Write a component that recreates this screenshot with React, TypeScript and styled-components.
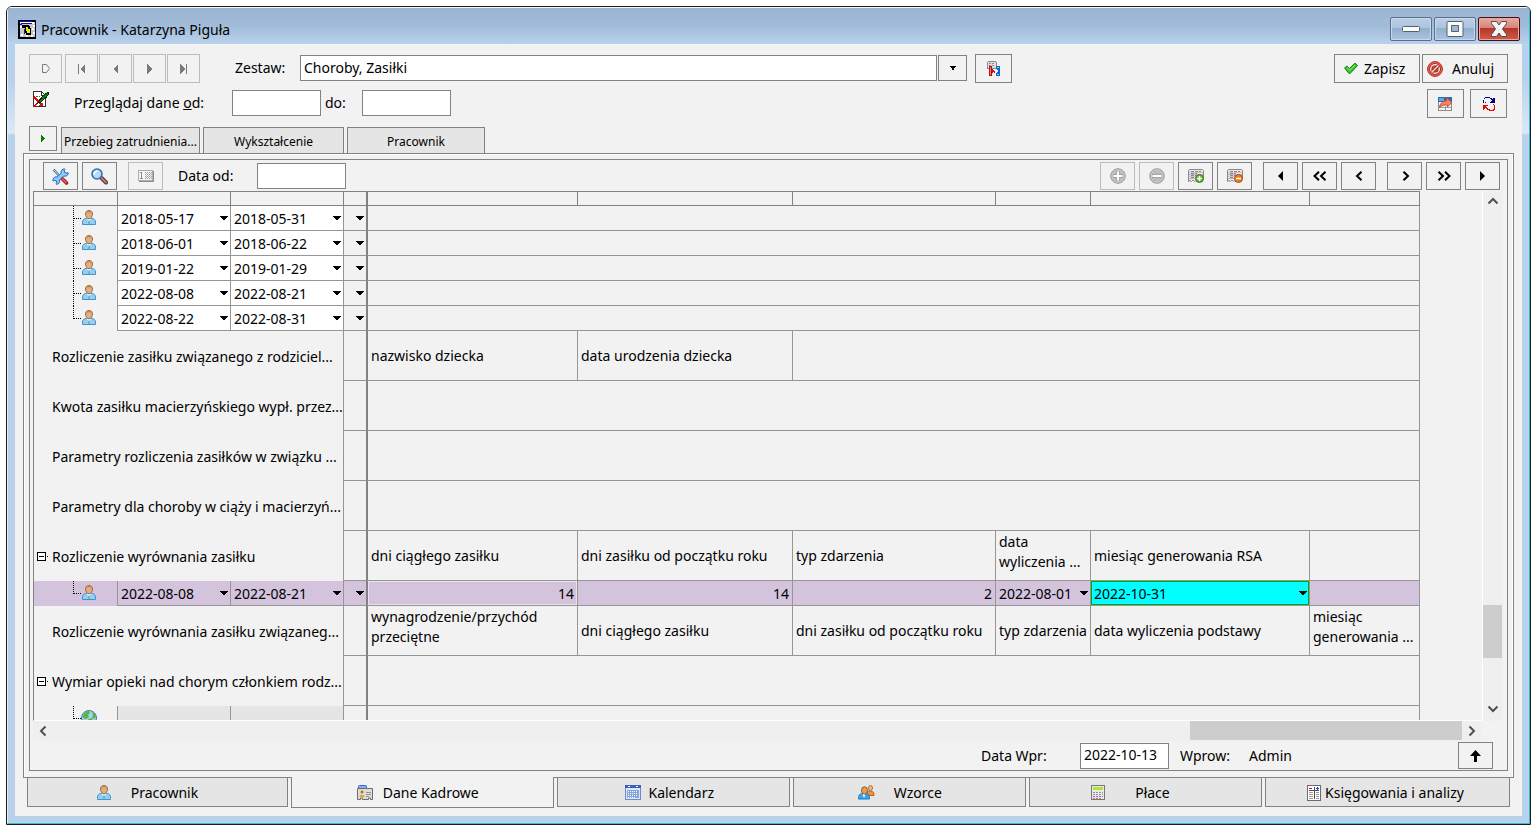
import React from "react";
import styled, { createGlobalStyle, css } from "styled-components";

const color = {
  face: "#f2f2f2",
  tab: "#e5e5e5",
  line: "#828282",
  grid: "#969696",
  soft: "#bcbcbc",
  selected: "#d3c3dc",
  thumb: "#cdcdcd",
};

const Global = createGlobalStyle`
  *, *::before, *::after { box-sizing: border-box; }
  body { margin: 0; background: #fff; color: #000; }
  body, button, input, select, table {
    font-family: "Noto Sans", "Open Sans", sans-serif;
    font-size: 14px;
    line-height: 20px;
  }
`;

/* ---------- window ---------- */

const Page = styled.div`
  height: 100vh;
  min-height: 600px;
  padding: 6px 6px 10px;
`;

const Window = styled.main`
  height: 100%;
  border: 1px solid #1c1c1c;
  border-radius: 6px 6px 0 0;
  overflow: hidden;
`;

const Frame = styled.div`
  height: 100%;
  display: flex;
  flex-direction: column;
  padding: 0 7px 7px;
  border: 1px solid #35bcd6;
  border-top-color: #f4f8fc;
  border-left-color: #e4eef8;
  background: linear-gradient(#9ab5d2 0, #a2bbd8 18px, #b8d1ec 36px, #b8d0ea 70px, #dce8f5 125px, #b9d1eb 127px);
`;

const TitleBar = styled.header`
  flex: none;
  height: 36px;
  display: flex;
  align-items: center;
  gap: 5px;
  padding: 0 2px 0 3px;
`;

const Title = styled.h1`
  flex: 1;
  margin: 0;
  padding-top: 8px;
  font-size: 14px;
  font-weight: 400;
`;

const TitleIcon = styled.span`
  display: flex;
  padding-top: 6px;
`;

const Captions = styled.div`
  display: flex;
  gap: 2px;
  padding-top: 5px;
`;

const CaptionButton = styled.button<{ $close?: boolean }>`
  width: 42px;
  height: 24px;
  padding: 0;
  display: flex;
  align-items: center;
  justify-content: center;
  border: 1px solid ${(p) => (p.$close ? "#4b0d14" : "#5b6f8a")};
  border-radius: 2px;
  box-shadow: inset 0 0 0 1px ${(p) => (p.$close ? "#e8a9a0" : "#c9d9ea")};
  background: ${(p) =>
    p.$close
      ? "linear-gradient(#e6aba2 0, #d98377 45%, #b5342a 46%, #cf5d45 100%)"
      : "linear-gradient(#bccfe5 0, #adc4de 45%, #92aecd 46%, #a9c4e2 100%)"};
`;

const Client = styled.div`
  flex: 1;
  min-height: 0;
  display: flex;
  flex-direction: column;
  background: ${color.face};
`;

/* ---------- shared controls ---------- */

const Button = styled.button<{ $w?: number; $h?: number; $inset?: number; $gap?: number }>`
  flex: none;
  width: ${(p) => p.$w ?? 35}px;
  height: ${(p) => p.$h ?? 28}px;
  display: flex;
  align-items: center;
  justify-content: ${(p) => (p.$inset === undefined ? "center" : "flex-start")};
  gap: ${(p) => p.$gap ?? 0}px;
  padding: 0 0 0 ${(p) => p.$inset ?? 0}px;
  border: 1px solid ${color.line};
  background: ${color.face};
  color: #000;

  &:disabled {
    border-color: ${color.soft};
  }
`;

const TextBox = styled.input`
  flex: none;
  width: 89px;
  height: 26px;
  padding: 0 3px 2px;
  border: 1px solid ${color.line};
  border-radius: 0;
  background: #fff;
  outline: 0;
`;

const ComboBox = styled.div`
  flex: 0 1 667px;
  min-width: 0;
  display: flex;
  gap: 1px;
  margin-right: 8px;
`;

const SetSelect = styled.select`
  flex: 1;
  height: 26px;
  min-width: 0;
  padding: 0 3px 1px;
  appearance: none;
  border: 1px solid ${color.line};
  border-radius: 0;
  background: #fff;
  color: #000;
`;

const Row = styled.div<{ $gap?: number; $ml?: number }>`
  display: flex;
  align-items: center;
  gap: ${(p) => p.$gap ?? 0}px;
  margin-left: ${(p) => p.$ml ?? 0}px;
`;

const Push = styled.div`
  flex: 1;
`;

/* ---------- top section ---------- */

const Top = styled.section`
  flex: none;
  display: flex;
  flex-direction: column;
  gap: 6px;
  padding: 10px 14px 0;
`;

const TopRow = styled.div`
  display: flex;
  align-items: flex-start;
  height: 29px;

  > label { line-height: 28px; }
  > input, > ${ComboBox} { margin-top: 1px; }
`;

const SetLabel = styled.label`
  flex: none;
  width: 65px;
  margin-left: 35px;
`;

const RangeIcon = styled.span`
  display: flex;
  width: 41px;
  padding: 2px 0 0 4px;
  margin-right: 4px;
`;

const RangeLabel = styled.label<{ $w: number; $ml?: number }>`
  flex: none;
  width: ${(p) => p.$w}px;
  margin-left: ${(p) => p.$ml ?? 0}px;
`;

const RangeTools = styled(Row)`
  margin-right: 1px;
`;

const UpperTabs = styled.nav`
  flex: none;
  display: flex;
  align-items: flex-end;
  gap: 3px;
  height: 35px;
  padding: 0 14px;
`;

const PlayCell = styled.div`
  margin-right: 1px;
  padding-bottom: 2px;
`;

const UpperTab = styled.button<{ $w: number }>`
  width: ${(p) => p.$w}px;
  height: 26px;
  padding: 2px 0 0;
  border: 1px solid ${color.line};
  border-bottom: 0;
  background: ${color.tab};
  font-size: 12px;
  white-space: nowrap;
`;

/* ---------- panels ---------- */

const OuterPanel = styled.section`
  flex: 1;
  min-height: 0;
  display: flex;
  margin: 0 8px;
  padding: 5px 5px 6px;
  border: 1px solid ${color.line};
  box-shadow: inset 1px 1px 0 #fff, inset -1px 0 0 #fff;
`;

const InnerPanel = styled.div`
  flex: 1;
  min-width: 0;
  display: flex;
  flex-direction: column;
  border: 1px solid ${color.line};
`;

const Toolbar = styled.div`
  flex: none;
  display: flex;
  align-items: center;
  height: 31px;
  padding: 2px 7px 1px 13px;
`;

const DateFrom = styled.label`
  width: 79px;
  margin-left: 15px;
`;

const GridArea = styled.div`
  flex: 1;
  min-height: 0;
  display: flex;
  margin: 0 4px 0 3px;
`;

const GridView = styled.div`
  flex: 1;
  min-width: 0;
  overflow: hidden;
  border-left: 1px solid ${color.line};
  border-bottom: 1px solid #fff;
`;

/* ---------- grid ---------- */

const Table = styled.table`
  width: 1386px;
  table-layout: fixed;
  border-collapse: separate;
  border-spacing: 0;
`;

const HeadCell = styled.th<{ $thick?: boolean }>`
  height: 15px;
  padding: 0;
  border: solid ${color.line};
  border-width: 1px ${(p) => (p.$thick ? 2 : 1)}px 1px 0;
`;

const Line = styled.tr<{ $tall?: boolean; $selected?: boolean }>`
  height: ${(p) => (p.$tall ? 50 : 25)}px;
  background: ${(p) => (p.$selected ? color.selected : "transparent")};
`;

type Tone = "white" | "grey" | "active" | "focus";

const tones = {
  white: css`background: #fff;`,
  grey: css`background: ${color.tab};`,
  active: css`
    background: #00ffff;
    box-shadow: inset 0 0 0 1px #00a818;
  `,
  focus: css`box-shadow: inset 0 0 0 1px #e9e4ec;`,
};

const Cell = styled.td<{ $tone?: Tone; $num?: boolean; $thick?: boolean; $two?: boolean }>`
  height: inherit;
  padding: 1px 3px 0;
  overflow: hidden;
  vertical-align: ${(p) => (p.$two ? "top" : "middle")};
  text-align: ${(p) => (p.$num ? "right" : "left")};
  white-space: ${(p) => (p.$two ? "normal" : "nowrap")};
  border: solid ${color.grid};
  border-width: 0 ${(p) => (p.$thick ? 2 : 1)}px 1px 0;
  ${(p) => p.$thick && `border-right-color: ${color.line};`}
  ${(p) => p.$tone && tones[p.$tone]}
`;

const TreeCell = styled.td`
  padding: 0;
  vertical-align: top;
  border-right: 1px solid ${color.grid};

  svg { display: block; }
`;

const GroupCell = styled.td`
  padding: 1px 0 0;
  vertical-align: middle;
  overflow: hidden;
  border-right: 1px solid ${color.grid};
`;

const GroupLabel = styled.div`
  display: grid;
  grid-template-columns: 18px 1fr;
  align-items: center;
  white-space: nowrap;
`;

const Toggle = styled.button`
  width: 14px;
  height: 9px;
  margin-left: 3px;
  padding: 0;
  border: 0;
  background: none;
  display: flex;
`;

const DateField = styled.div`
  display: flex;
  align-items: center;
  height: 22px;
  margin-right: -2px;
`;

const DateInput = styled.input`
  flex: 1;
  width: 0;
  min-width: 0;
  height: 20px;
  padding: 0;
  border: 0;
  background: none;
  outline: 0;
`;

const DropButton = styled.button`
  flex: none;
  width: 10px;
  height: 20px;
  margin-left: auto;
  padding: 0 0 2px;
  display: flex;
  align-items: center;
  justify-content: center;
  border: 0;
  background: none;
`;

/* ---------- scroll bars ---------- */

const VScroll = styled.div`
  flex: none;
  width: 21px;
  display: flex;
  flex-direction: column;
  padding: 0 1px 2px 0;
  border-left: 1px solid #fff;
  background: #efefef;
`;

const HScroll = styled.div`
  flex: none;
  display: flex;
  height: 20px;
  margin: 0 26px 0 3px;
  background: #efefef;
`;

const ScrollButton = styled.button`
  flex: none;
  width: 19px;
  height: 20px;
  padding: 0;
  display: flex;
  align-items: center;
  justify-content: center;
  border: 0;
  background: none;
`;

const Track = styled.div<{ $share: number }>`
  flex: ${(p) => p.$share} 1 0;
`;

const VThumb = styled.div`
  flex: none;
  width: 19px;
  height: 53px;
  background: ${color.thumb};
`;

const HThumb = styled.div`
  flex: none;
  width: 272px;
  height: 19px;
  background: ${color.thumb};
`;

const Footer = styled.footer`
  flex: none;
  display: flex;
  align-items: center;
  justify-content: flex-end;
  height: 29px;
  padding-right: 14px;
`;

const FooterLabel = styled.label`
  width: 99px;
`;

const Author = styled.span<{ $w: number }>`
  width: ${(p) => p.$w}px;
`;

/* ---------- lower tabs ---------- */

const LowerTabs = styled.nav`
  flex: none;
  display: flex;
  align-items: flex-start;
  gap: 3px;
  height: 38px;
  padding: 0 12px;
`;

const LowerTab = styled.button<{ $share: number; $active?: boolean }>`
  flex: ${(p) => p.$share} 1 0;
  min-width: 0;
  height: ${(p) => (p.$active ? 31 : 29)}px;
  margin-top: ${(p) => (p.$active ? -1 : 0)}px;
  padding: 1px 0 0;
  display: flex;
  align-items: center;
  justify-content: center;
  border: 1px solid ${color.line};
  border-top: 0;
  background: ${(p) => (p.$active ? color.face : color.tab)};
  color: #000;
  z-index: 1;
`;

const LowerLabel = styled.span<{ $w: number }>`
  width: ${(p) => p.$w}px;
  text-align: center;
  white-space: nowrap;
`;

/* ---------- icons ---------- */

const Svg = ({ w = 16, h = 16, smooth, children }: { w?: number; h?: number; smooth?: boolean; children: React.ReactNode }) => (
  <svg width={w} height={h} viewBox={`0 0 ${w} ${h}`} fill="none" shapeRendering={smooth ? "auto" : "crispEdges"} aria-hidden="true">
    {children}
  </svg>
);

const AppIcon = () => (
  <Svg w={18} h={19}>
    <rect width="18" height="19" fill="#000" />
    <rect x="2" y="2" width="15" height="15" fill="#c6c9d2" />
    <path d="M1 1h13v1h-13zM3 3h12v1h-12z" fill="#1010a8" />
    <path d="M2 2h12v1h-12z" fill="#fff" />
    <path d="M14 2h2v2h-2zM15 5h2v2h-2zM14 8h2v2h-2zM15 12h2v2h-2zM13 15h2v2h-2zM3 14h2v2h-2zM2 6h2v2h-2zM8 15h2v2h-2z" fill="#fff" />
    <path d="M4 5h7v1h1v2h1v7h-5v-2h-1v-5h-3z" fill="#000" />
    <path d="M8 7h2v2h2v4h-3v-2h-1z" fill="#f6ee00" />
    <path d="M6 9h1v5h-1zM2 4h2v1h-2z" fill="#1818a8" />
  </Svg>
);

const NavIcon = ({ kind }: { kind: "home" | "first" | "prev" | "next" | "last" }) => (
  <Svg w={10} h={10}>
    {kind === "home" && <path d="M1.500 .5h4l3 4-3 4h-4z" stroke="#7a7a7a" shapeRendering="auto" />}
    {kind === "first" && <path d="M1 0h1v10h-1zM8 0v10l-5-5z" fill="#7a7a7a" />}
    {kind === "prev" && <path d="M7 0v10l-5-5z" fill="#7a7a7a" />}
    {kind === "next" && <path d="M2 0v10l5-5z" fill="#7a7a7a" />}
    {kind === "last" && <path d="M1 0v10l5-5zM7 0h1v10h-1z" fill="#7a7a7a" />}
  </Svg>
);

const SmallArrow = () => (
  <Svg w={6} h={4}>
    <path d="M0 0h6v1h-1v1h-1v2h-2v-2h-1v-1h-1z" fill="#000" />
  </Svg>
);

const CellArrow = () => (
  <Svg w={8} h={4}>
    <path d="M0 0h8v1h-1v1h-1v1h-1v1h-2v-1h-1v-1h-1v-1h-1z" fill="#000" />
  </Svg>
);

const EditIcon = () => (
  <Svg w={17}>
    <path d="M.5 .5h8l4 4v11h-12z" fill="#fff" stroke="#333" />
    <path d="M8.500 .5v4h4" stroke="#333" />
    <path d="M3 5.500h4M2 8.500h3M8 12.500h3M6 14.500h4" stroke="#555" strokeDasharray="2 1" />
    <path d="M1 6l9 9M8 8l-7 8" stroke="#f00000" strokeWidth="1.600" />
    <path d="M5 12l1.500-3L12 3l3-1.500.5 1.500-2 3L8 11z" fill="#0a8010" stroke="#042008" />
  </Svg>
);

const FilterIcon = () => (
  <Svg w={14} h={16}>
    <path d="M1.500 .5h7l1 1v6h-9v-6z" fill="#dcdce4" stroke="#988890" />
    <path d="M2 2.500h6M2 4.500h2M5 4.500h3" stroke="#a08890" strokeDasharray="2 1" />
    <path d="M2.500 5.500h2v9h-2z" fill="#f07860" stroke="#b01010" />
    <path d="M5 8h1v1h1v1h1v2h-1v-1h-1v1h-1z" fill="#d01010" />
    <path d="M9 5h4v10h-4v-3h1v-1h1v-2h-1v-1h-1z" fill="#0a68d0" />
    <path d="M10 6h2v1h-2zM10 13h2v1h-2z" fill="#9cc8f4" />
  </Svg>
);

const CheckIcon = () => (
  <Svg w={14} h={13} smooth>
    <path d="M.7 6l2-2 2.800 2.500L11 1.200l2.500 2.300L6 11.500H5z" fill="#35cc2c" stroke="#0b720b" />
    <path d="M2.800 5.500l2.700 2.600L11.200 3" stroke="#8df080" />
  </Svg>
);

const CancelIcon = () => (
  <Svg smooth>
    <circle cx="8" cy="8" r="7.400" fill="#e86458" stroke="#b42c20" />
    <circle cx="8" cy="8" r="4.300" fill="#dc4c40" stroke="#9c1c14" strokeWidth="3" />
    <circle cx="8" cy="8" r="4.300" stroke="#fbe0dc" strokeWidth="1.500" />
    <path d="M5 11l6-6" stroke="#9c1c14" strokeWidth="3" />
    <path d="M5 11l6-6" stroke="#fbe0dc" strokeWidth="1.500" />
  </Svg>
);

const ExportIcon = () => (
  <Svg w={15} h={14}>
    <rect x="0.500" y="0.500" width="13" height="13" fill="#f4f4f4" stroke="#8c8c8c" />
    <rect x="0" y="0" width="14" height="5" fill="#2c6cac" />
    <rect x="1" y="1" width="5" height="3" fill="#68a4dc" />
    <path d="M1 10.500h12M7.500 9v4" stroke="#9c9c9c" />
    <path d="M1.500 10.500c.5-4 3-6.500 7-6.500V.8l5.500 4.700-4.500 4.300V8C6 7.500 4 8.500 1.500 10.500z" fill="#f88468" stroke="#cc4830" shapeRendering="auto" />
  </Svg>
);

const RefreshIcon = () => (
  <Svg w={12} h={14}>
    <path d="M1 1h1v-1h5v1h2v1h1v-1h2v5h-5v-1h1v-1h1v-1h-1v-1h-1v-1h-5v1h-1v4h-1z" fill="#00007c" />
    <path d="M2 5h1v1h-1z" fill="#00007c" />
    <path d="M0 8h5v1h-2v1h1v1h1v1h2v1h3v-1h1v-4h-1v-1h1v1h1v5h-1v1h-5v-1h-2v-1h-1v-1h-1v1h-1v1h-1z" fill="#f00000" />
  </Svg>
);

const PlayIcon = () => (
  <Svg w={4} h={7}>
    <path d="M0 0h1v1h1v1h1v1h1v1h-1v1h-1v1h-1v1h-1z" fill="#008000" />
  </Svg>
);

const ToolsIcon = () => (
  <Svg w={17} h={17} smooth>
    <path d="M1.500 1.500l5.500 6" stroke="#37628e" strokeWidth="2.400" />
    <path d="M1.500 1.500l5.500 6" stroke="#e0eefa" />
    <path d="M10 10.500l4.500 4.500" stroke="#a81818" strokeWidth="3.600" strokeLinecap="round" />
    <path d="M10 10.500l4.500 4.500" stroke="#ee6a5a" strokeWidth="1.400" />
    <path d="M11 1.200c2-.8 2.400 0 1.200 1.400l.6 2 2 .5c1-1 2-.6 1.200 1-.8 1.900-2.600 2.400-4.500 1.900l-4 4c.5 2-.4 3.800-2.200 4.200-1.600.3-1.500-.6-.5-1.500l-.5-1.800-2-.5c-1 .9-1.800.5-1.300-1C1.600 9.300 3.300 8.600 5.200 9l4-4c-.3-1.900.2-3.200 1.800-3.800z" fill="#8cccf8" stroke="#1f62b0" />
  </Svg>
);

const SearchIcon = () => (
  <Svg w={17} h={17} smooth>
    <path d="M10.500 10l4.500 4.500" stroke="#5c302c" strokeWidth="4" strokeLinecap="round" />
    <path d="M10.500 10l4.500 4.500" stroke="#b08880" strokeWidth="1.800" strokeLinecap="round" />
    <circle cx="6" cy="6" r="5" fill="#b4dcfa" stroke="#3a6ab0" strokeWidth="1.600" />
    <path d="M3.200 6.500a3 3 0 013.300-3.300" stroke="#fff" strokeWidth="1.600" />
  </Svg>
);

const CardIcon = () => (
  <Svg w={16} h={12}>
    <rect x="1" y="1" width="15" height="11" fill="#8c8c8c" />
    <rect x="0.500" y="0.500" width="14" height="10" fill="#f4f4f4" stroke="#acacac" />
    <path d="M2 2.500h2M3.500 2v6M2 8.500h3" stroke="#8c8c8c" />
    <path d="M7 2.500h7M7 4.500h7M7 6.500h7M7 8.500h7" stroke="#a0a0a0" strokeDasharray="1 1" />
    <path d="M8 3.500h6M8 5.500h6M8 7.500h6" stroke="#b4b4b4" strokeDasharray="1 1" />
  </Svg>
);

const CircleIcon = ({ plus }: { plus?: boolean }) => (
  <Svg smooth>
    <circle cx="8" cy="8" r="7.300" fill="#bcbcbc" stroke="#9c9c9c" />
    <circle cx="8" cy="8" r="6" stroke="#cacaca" />
    <path d={plus ? "M8 3v10M3 8h10" : "M3 8h10"} stroke="#a4a4a4" strokeWidth="4" />
    <path d={plus ? "M8 3.500v9M3.500 8h9" : "M3.500 8h9"} stroke="#fff" strokeWidth="2" />
  </Svg>
);

const RecordIcon = ({ plus }: { plus?: boolean }) => (
  <Svg w={16} h={14} smooth>
    <path d="M.5 12.500V2c0-1 .5-1.500 1.500-1.500h12c1 0 1.500.5 1.500 1.500v8" fill="#e8e8ea" />
    <path d="M.5 12.500V2c0-1 .5-1.500 1.500-1.500h12c1 0 1.500.5 1.500 1.500v8M.5 12.500l1.500-1 1.500 1 1.500-1.500 1.500 1.500 1.500-1" stroke="#88888c" />
    <path d="M3 2.500h10M3 4.500h6M3 6.500h10M3 8.500h5" stroke="#888890" shapeRendering="crispEdges" strokeDasharray="3 1" />
    <path d="M1 3.500h14" stroke="#f8b4ac" shapeRendering="crispEdges" />
    <path d="M1 5.500h14M1 9.500h6" stroke="#a4b8ec" shapeRendering="crispEdges" />
    <path d="M1 7.500h14" stroke="#f8b4ac" shapeRendering="crispEdges" />
    <circle cx="11.500" cy="9.500" r="4" fill={plus ? "#64b038" : "#e88020"} stroke={plus ? "#3c8418" : "#ac5408"} />
    <path d={plus ? "M11.500 7v5M9 9.500h5" : "M9 9.500h5"} stroke="#fff" strokeWidth="1.600" />
  </Svg>
);

const MoveIcon = ({ kind }: { kind: "start" | "fastBack" | "back" | "forward" | "fastForward" | "end" }) => (
  <Svg w={14} h={10} smooth>
    {kind === "start" && <path d="M9 0v10L4 5z" fill="#000" />}
    {kind === "end" && <path d="M4 0v10l5-5z" fill="#000" />}
    {kind === "back" && <path d="M9.500 .7L5 5l4.500 4.300" stroke="#000" strokeWidth="2" />}
    {kind === "forward" && <path d="M5.500 .7L10 5 5.500 9.300" stroke="#000" strokeWidth="2" />}
    {kind === "fastBack" && <path d="M6 .7L1.500 5 6 9.300M12.500 .7L8 5l4.500 4.300" stroke="#000" strokeWidth="2" />}
    {kind === "fastForward" && <path d="M1.500 .7L6 5 1.500 9.300M8 .7L12.500 5 8 9.300" stroke="#000" strokeWidth="2" />}
  </Svg>
);

const ScrollArrow = ({ d }: { d: string }) => (
  <Svg w={12} h={12} smooth>
    <path d={d} stroke="#505050" strokeWidth="2" />
  </Svg>
);

const UpIcon = () => (
  <Svg w={11} h={12} smooth>
    <path d="M5.500 0L11 6H7v6H4V6H0z" fill="#000" />
  </Svg>
);

const personShape = (
  <>
    <path d="M.5 14.500V12c0-2 1.500-3.500 3.500-3.500h6c2 0 3.500 1.500 3.500 3.500v2.500z" fill="#98ccf4" stroke="#3c98cc" />
    <path d="M4.500 8.500L7 12l2.500-3.500z" fill="#e4f4ff" />
    <path d="M6.500 10.500h1v3.500h-1z" fill="#38a498" />
    <path d="M7 .5c2.500 0 3.500 1.500 3.500 3.500S9 8.800 7 8.800 3.500 6 3.500 4 4.500.5 7 .5z" fill="#dfb080" stroke="#a4683c" />
    <path d="M4.500 3c1-1.800 4-1.800 5 0" stroke="#bc7c4c" />
  </>
);

const PersonIcon = () => (
  <Svg w={14} h={15} smooth>
    {personShape}
  </Svg>
);

const FolderIcon = () => (
  <Svg w={17} h={16} smooth>
    <path d="M1.500 4V1.500c0-.7.300-1 1-1h6c.7 0 1 .3 1 1V3" fill="#88acf8" stroke="#3c64d0" />
    <path d="M.5 3.500h15v11h-2v-1.500h-2v1.500h-6v-1.500h-2v1.500h-3z" fill="#dcdcdc" stroke="#6c6c6c" />
    <circle cx="5" cy="7" r="1.500" fill="#b47808" />
    <path d="M2.500 12c0-3 5-3 5 0z" fill="#e4a41c" />
    <path d="M9 7.500h5M9 9.500h5M9 11.500h3" stroke="#949494" />
  </Svg>
);

const CalendarIcon = () => (
  <Svg>
    <rect x="0.500" y="0.500" width="15" height="14" fill="#dce6f8" stroke="#7088c4" />
    <rect width="16" height="3" fill="#3c60bc" />
    <path d="M3 1h2v1h-2zM11 1h2v1h-2z" fill="#fff" />
    <rect x="2" y="5" width="12" height="8" fill="#88a4dc" />
    <path d="M3 6.500h10M3 8.500h10M3 10.500h10M3 12.500h7" stroke="#f4f8ff" strokeDasharray="1 1" />
  </Svg>
);

const PeopleIcon = () => (
  <Svg w={17} h={15} smooth>
    <path d="M9 10c0-4 1-4 3-4s4 0 4 4.500h-5z" fill="#f09040" stroke="#c0601c" />
    <ellipse cx="12.500" cy="3" rx="2" ry="2.500" fill="#e8c090" stroke="#b07038" />
    <path d="M.5 14c0-4 1-5 3-5h5c2 0 3 1 3 5z" fill="#38a4f4" stroke="#1878c8" />
    <path d="M4.500 9l1.500 4 1.500-4z" fill="#fff" />
    <ellipse cx="6.500" cy="5.500" rx="3" ry="3.700" fill="#dca068" stroke="#985420" />
  </Svg>
);

const CalculatorIcon = () => (
  <Svg w={14} h={15}>
    <rect x="0.500" y="0.500" width="13" height="14" fill="#e8e8e8" stroke="#787878" />
    <rect x="2" y="2" width="10" height="3" fill="#b4e430" />
    <path d="M2 7.500h10M2 9.500h10" stroke="#949494" strokeDasharray="2 1" />
    <path d="M2 11.500h10" stroke="#6c80d0" strokeDasharray="2 1" />
    <path d="M2 13.500h8" stroke="#e06c50" strokeDasharray="2 1" />
  </Svg>
);

const LedgerIcon = () => (
  <Svg w={14} h={16}>
    <rect x="0.500" y="0.500" width="13" height="15" fill="#fff" stroke="#6c6c6c" />
    <path d="M7.500 2v12M2 5.500h10" stroke="#505050" />
    <path d="M2 7.500h4M2 9.500h4M2 11.500h4M2 13.500h4M9 7.500h3M9 9.500h3M9 11.500h3M9 13.500h3" stroke="#999" />
    <path d="M2 3.500h3" stroke="#e01010" />
    <path d="M9 3.500h3M10.500 2v3" stroke="#1040e0" />
  </Svg>
);

const TreeBranch = ({ last, globe }: { last?: boolean; globe?: boolean }) => (
  <Svg w={83} h={25}>
    <path d={last ? "M39.500 0v13" : "M39.500 0v25"} stroke="#000" strokeDasharray="1 1" />
    <path d="M40 12.500h7" stroke="#000" strokeDasharray="1 1" />
    {globe ? (
      <g shapeRendering="auto">
        <circle cx="55" cy="12" r="7.500" fill="#a4d0f8" stroke="#3c78b8" />
        <path d="M49 9l3-3.500 3-.5 1 2-2 2 1 2-3 2-3-1zM58 6l2.500 1 1.500 4-2 2-2-2 1-2z" fill="#5cb83c" />
        <path d="M54 13l4-1 1 3-3 3z" fill="#5cb83c" />
      </g>
    ) : (
      <g transform="translate(48 4)" shapeRendering="auto">
        {personShape}
      </g>
    )}
  </Svg>
);

const MinusBox = () => (
  <Svg w={12} h={9}>
    <rect x="0.500" y="0.500" width="8" height="8" fill="#fff" stroke="#000" />
    <path d="M2 4.500h5M10 4.500h1" stroke="#000" />
  </Svg>
);

const MinimizeGlyph = () => (
  <Svg w={18} h={8} smooth>
    <rect x="0.500" y="1.500" width="17" height="5" rx="1" fill="#fafafa" stroke="#55606e" />
  </Svg>
);

const MaximizeGlyph = () => (
  <Svg w={18} h={16} smooth>
    <rect x="1" y="0.500" width="16" height="15" rx="1" fill="#fafafa" stroke="#55606e" />
    <path d="M5.500 4.500h7v6h-7z" fill="#9cb6d4" stroke="#55606e" />
  </Svg>
);

const CloseGlyph = () => (
  <Svg w={18} h={16} smooth>
    <path d="M1.500 .5h5L9 4l2.500-3.500h5v2L12.500 8l4 5.500v2h-5L9 12l-2.500 3.500h-5v-2l4-5.500-4-5.500z" fill="#f4f4f4" stroke="#5c4a52" />
  </Svg>
);

/* ---------- grid parts ---------- */

const widths = [84, 113, 113, 24, 210, 215, 203, 95, 219, 110];

const DateCell = ({ value, tone, name }: { value: string; tone?: Tone; name: string }) => (
  <Cell $tone={tone}>
    <DateField>
      <DateInput defaultValue={value} aria-label={name} />
      <DropButton aria-label={`${name}: lista`}>
        <CellArrow />
      </DropButton>
    </DateField>
  </Cell>
);

const MenuCell = () => (
  <Cell $thick>
    <DateField>
      <DropButton aria-label="Menu wiersza">
        <CellArrow />
      </DropButton>
    </DateField>
  </Cell>
);

const Group = ({ label, open, children }: { label: string; open?: boolean; children: React.ReactNode }) => (
  <Line $tall>
    <GroupCell colSpan={3}>
      <GroupLabel>
        {open ? (
          <Toggle aria-label="Zwiń">
            <MinusBox />
          </Toggle>
        ) : (
          <span />
        )}
        {label}
      </GroupLabel>
    </GroupCell>
    <Cell $thick />
    {children}
  </Line>
);

const periods = [
  ["2018-05-17", "2018-05-31"],
  ["2018-06-01", "2018-06-22"],
  ["2019-01-22", "2019-01-29"],
  ["2022-08-08", "2022-08-21"],
  ["2022-08-22", "2022-08-31"],
];

const Grid = () => (
  <Table>
    <colgroup>
      {widths.map((w, i) => (
        <col key={i} width={w} />
      ))}
    </colgroup>
    <thead>
      <tr>
        {widths.map((_, i) => (
          <HeadCell key={i} $thick={i === 3} />
        ))}
      </tr>
    </thead>
    <tbody>
      {periods.map(([from, to], i) => (
        <Line key={from}>
          <TreeCell>
            <TreeBranch last={i === periods.length - 1} />
          </TreeCell>
          <DateCell value={from} tone="white" name="Od" />
          <DateCell value={to} tone="white" name="Do" />
          <MenuCell />
          <Cell colSpan={6} />
        </Line>
      ))}
      <Group label="Rozliczenie zasiłku związanego z rodziciel...">
        <Cell>nazwisko dziecka</Cell>
        <Cell>data urodzenia dziecka</Cell>
        <Cell colSpan={4} />
      </Group>
      <Group label="Kwota zasiłku macierzyńskiego wypł. przez...">
        <Cell colSpan={6} />
      </Group>
      <Group label="Parametry rozliczenia zasiłków w związku ...">
        <Cell colSpan={6} />
      </Group>
      <Group label="Parametry dla choroby w ciąży i macierzyń...">
        <Cell colSpan={6} />
      </Group>
      <Group label="Rozliczenie wyrównania zasiłku" open>
        <Cell>dni ciągłego zasiłku</Cell>
        <Cell>dni zasiłku od początku roku</Cell>
        <Cell>typ zdarzenia</Cell>
        <Cell $two>data wyliczenia ...</Cell>
        <Cell>miesiąc generowania RSA</Cell>
        <Cell />
      </Group>
      <Line $selected>
        <TreeCell>
          <TreeBranch last />
        </TreeCell>
        <DateCell value="2022-08-08" name="Od" />
        <DateCell value="2022-08-21" name="Do" />
        <MenuCell />
        <Cell $num $tone="focus">14</Cell>
        <Cell $num>14</Cell>
        <Cell $num>2</Cell>
        <DateCell value="2022-08-01" name="Data wyliczenia" />
        <DateCell value="2022-10-31" tone="active" name="Miesiąc generowania RSA" />
        <Cell />
      </Line>
      <Group label="Rozliczenie wyrównania zasiłku związaneg...">
        <Cell $two>wynagrodzenie/przychód przeciętne</Cell>
        <Cell>dni ciągłego zasiłku</Cell>
        <Cell>dni zasiłku od początku roku</Cell>
        <Cell>typ zdarzenia</Cell>
        <Cell>data wyliczenia podstawy</Cell>
        <Cell $two>miesiąc generowania ...</Cell>
      </Group>
      <Group label="Wymiar opieki nad chorym członkiem rodz..." open>
        <Cell colSpan={6} />
      </Group>
      <Line>
        <TreeCell>
          <TreeBranch last globe />
        </TreeCell>
        <Cell $tone="grey" />
        <Cell $tone="grey" />
        <Cell $thick />
        <Cell colSpan={6} />
      </Line>
    </tbody>
  </Table>
);

const lowerTabs = [
  { text: "Pracownik", share: 261, label: 106, icon: <PersonIcon /> },
  { text: "Dane Kadrowe", share: 263, label: 114, icon: <FolderIcon />, active: true },
  { text: "Kalendarz", share: 233, label: 80, icon: <CalendarIcon /> },
  { text: "Wzorce", share: 233, label: 86, icon: <PeopleIcon /> },
  { text: "Płace", share: 233, label: 94, icon: <CalculatorIcon /> },
  { text: "Księgowania i analizy", share: 245, label: 146, icon: <LedgerIcon /> },
];

export default function App() {
  return (
    <Page>
      <Global />
      <Window>
        <Frame>
          <TitleBar>
            <TitleIcon>
              <AppIcon />
            </TitleIcon>
            <Title>Pracownik - Katarzyna Piguła</Title>
            <Captions>
              <CaptionButton aria-label="Minimalizuj">
                <MinimizeGlyph />
              </CaptionButton>
              <CaptionButton aria-label="Maksymalizuj">
                <MaximizeGlyph />
              </CaptionButton>
              <CaptionButton $close aria-label="Zamknij">
                <CloseGlyph />
              </CaptionButton>
            </Captions>
          </TitleBar>

          <Client>
            <Top>
              <TopRow>
                <Button $w={33} $h={29} disabled aria-label="Bieżący">
                  <NavIcon kind="home" />
                </Button>
                <Row $gap={1} $ml={3}>
                  {(["first", "prev", "next", "last"] as const).map((kind) => (
                    <Button key={kind} $w={33} $h={29} disabled aria-label={kind}>
                      <NavIcon kind={kind} />
                    </Button>
                  ))}
                </Row>
                <SetLabel htmlFor="set">Zestaw:</SetLabel>
                <ComboBox>
                  <SetSelect id="set">
                    <option>Choroby, Zasiłki</option>
                  </SetSelect>
                  <Button $w={29} $h={26} aria-label="Rozwiń zestawy">
                    <SmallArrow />
                  </Button>
                </ComboBox>
                <Button $w={37} $h={29} aria-label="Filtr zestawu">
                  <FilterIcon />
                </Button>
                <Push />
                <Row $gap={2}>
                  <Button $w={86} $h={29} $inset={9} $gap={6}>
                    <CheckIcon />
                    Zapisz
                  </Button>
                  <Button $w={86} $h={29} $inset={4} $gap={9}>
                    <CancelIcon />
                    Anuluj
                  </Button>
                </Row>
              </TopRow>
              <TopRow>
                <RangeIcon>
                  <EditIcon />
                </RangeIcon>
                <RangeLabel $w={158} htmlFor="from">
                  Przeglądaj dane <u>o</u>d:
                </RangeLabel>
                <TextBox id="from" />
                <RangeLabel $w={37} $ml={4} htmlFor="to">
                  do:
                </RangeLabel>
                <TextBox id="to" />
                <Push />
                <RangeTools $gap={6}>
                  <Button $w={37} $h={29} aria-label="Eksport">
                    <ExportIcon />
                  </Button>
                  <Button $w={37} $h={29} aria-label="Odśwież">
                    <RefreshIcon />
                  </Button>
                </RangeTools>
              </TopRow>
            </Top>

            <UpperTabs>
              <PlayCell>
                <Button $w={28} $h={25} aria-label="Dalej">
                  <PlayIcon />
                </Button>
              </PlayCell>
              <UpperTab $w={139}>Przebieg zatrudnienia...</UpperTab>
              <UpperTab $w={141}>Wykształcenie</UpperTab>
              <UpperTab $w={138}>Pracownik</UpperTab>
            </UpperTabs>

            <OuterPanel>
              <InnerPanel>
                <Toolbar>
                  <Row $gap={4}>
                    <Button aria-label="Narzędzia">
                      <ToolsIcon />
                    </Button>
                    <Button aria-label="Szukaj">
                      <SearchIcon />
                    </Button>
                  </Row>
                  <Row $ml={11}>
                    <Button disabled aria-label="Karta">
                      <CardIcon />
                    </Button>
                  </Row>
                  <DateFrom htmlFor="date-from">Data od:</DateFrom>
                  <TextBox id="date-from" />
                  <Push />
                  <Row $gap={4}>
                    <Button disabled aria-label="Dodaj">
                      <CircleIcon plus />
                    </Button>
                    <Button disabled aria-label="Usuń">
                      <CircleIcon />
                    </Button>
                    <Button aria-label="Dodaj zapis">
                      <RecordIcon plus />
                    </Button>
                    <Button aria-label="Usuń zapis">
                      <RecordIcon />
                    </Button>
                  </Row>
                  <Row $gap={4} $ml={11}>
                    {(["start", "fastBack", "back"] as const).map((kind) => (
                      <Button key={kind} aria-label={kind}>
                        <MoveIcon kind={kind} />
                      </Button>
                    ))}
                  </Row>
                  <Row $gap={4} $ml={11}>
                    {(["forward", "fastForward", "end"] as const).map((kind) => (
                      <Button key={kind} aria-label={kind}>
                        <MoveIcon kind={kind} />
                      </Button>
                    ))}
                  </Row>
                </Toolbar>

                <GridArea>
                  <GridView>
                    <Grid />
                  </GridView>
                  <VScroll>
                    <ScrollButton aria-label="W górę">
                      <ScrollArrow d="M1.500 8.500L6 4l4.500 4.500" />
                    </ScrollButton>
                    <Track $share={394} />
                    <VThumb />
                    <Track $share={41} />
                    <ScrollButton aria-label="W dół">
                      <ScrollArrow d="M1.500 3.500L6 8l4.500-4.500" />
                    </ScrollButton>
                  </VScroll>
                </GridArea>
                <HScroll>
                  <ScrollButton aria-label="W lewo">
                    <ScrollArrow d="M8.500 1.500L4 6l4.500 4.500" />
                  </ScrollButton>
                  <Track $share={1} />
                  <HThumb />
                  <ScrollButton aria-label="W prawo">
                    <ScrollArrow d="M3.500 1.500L8 6l-4.500 4.500" />
                  </ScrollButton>
                </HScroll>

                <Footer>
                  <FooterLabel htmlFor="entry-date">Data Wpr:</FooterLabel>
                  <TextBox id="entry-date" defaultValue="2022-10-13" />
                  <Row $ml={11}>
                    <Author $w={69}>Wprow:</Author>
                    <Author $w={209}>Admin</Author>
                  </Row>
                  <Button $h={27} aria-label="Do góry">
                    <UpIcon />
                  </Button>
                </Footer>
              </InnerPanel>
            </OuterPanel>

            <LowerTabs>
              {lowerTabs.map((t) => (
                <LowerTab key={t.text} $share={t.share} $active={t.active}>
                  {t.icon}
                  <LowerLabel $w={t.label}>{t.text}</LowerLabel>
                </LowerTab>
              ))}
            </LowerTabs>
          </Client>
        </Frame>
      </Window>
    </Page>
  );
}
